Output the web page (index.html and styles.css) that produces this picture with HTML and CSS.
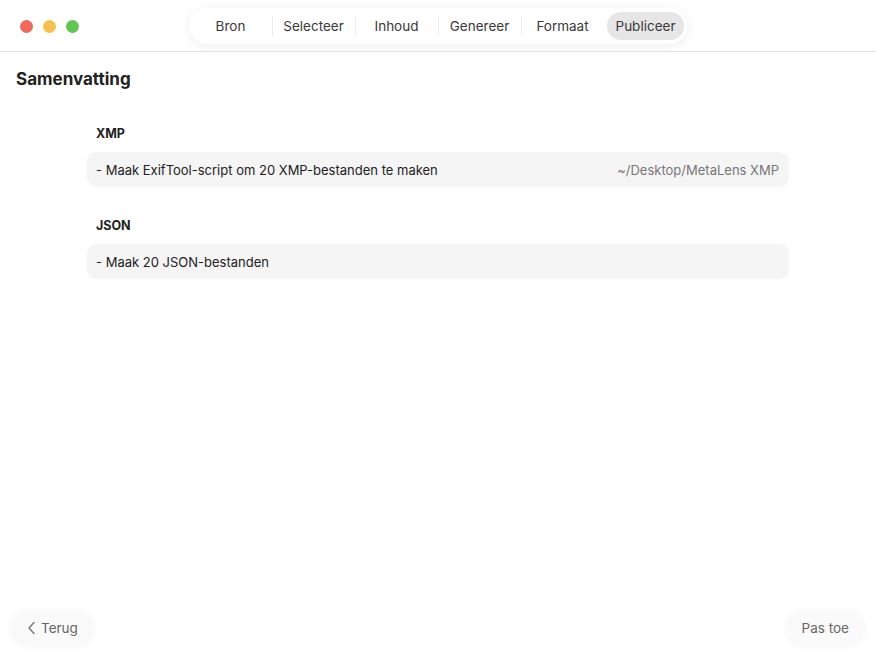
FILE: index.html
```html
<!DOCTYPE html>
<html lang="nl">
<head>
    <meta charset="UTF-8">
    <title>Publiceer</title>
    <link rel="stylesheet" href="styles.css">
</head>
<body>
    <header class="titlebar">
        <div class="traffic">
            <span class="light red"></span>
            <span class="light yellow"></span>
            <span class="light green"></span>
        </div>
        <nav class="steps">
            <span class="step">Bron</span>
            <span class="step">Selecteer</span>
            <span class="step">Inhoud</span>
            <span class="step">Genereer</span>
            <span class="step">Formaat</span>
            <span class="step active">Publiceer</span>
        </nav>
    </header>

    <main class="content">
        <h1 class="page_title">Samenvatting</h1>

        <section class="group">
            <h2 class="group_label">XMP</h2>
            <div class="row">
                <span>- Maak ExifTool-script om 20 XMP-bestanden te maken</span>
                <span class="row_path">~/Desktop/MetaLens XMP</span>
            </div>
        </section>

        <section class="group">
            <h2 class="group_label">JSON</h2>
            <div class="row">
                <span>- Maak 20 JSON-bestanden</span>
            </div>
        </section>
    </main>

    <footer class="actions">
        <button class="btn">
            <svg width="9" height="14" viewBox="0 0 9 14"><path d="M7 1.5 L2 7 L7 12.5" fill="none" stroke="#777" stroke-width="1.4" stroke-linecap="round" stroke-linejoin="round"/></svg>
            Terug
        </button>
        <button class="btn">Pas toe</button>
    </footer>
</body>
</html>
```

FILE: styles.css
```css
html, body {
    height: 100%;
}

body {
    margin: 0;
    font-family: 'Inter', 'Liberation Sans', sans-serif;
    color: #222;
    background: #fff;
    display: flex;
    flex-direction: column;
}

.titlebar {
    height: 52px;
    border-bottom: 1px solid #e3e3e3;
    display: flex;
    align-items: flex-start;
    box-sizing: border-box;
    flex-shrink: 0;
}

.traffic {
    display: flex;
    gap: 10px;
    padding: 20px 0 0 20px;
}

.light {
    width: 13px;
    height: 13px;
    border-radius: 50%;
}

.red { background: #ec6a5e; }
.yellow { background: #f4c04f; }
.green { background: #61c554; }

.steps {
    margin: 8px 0 0 110px;
    height: 36px;
    display: flex;
    background: #fff;
    border-radius: 18px;
    box-shadow: 0 2px 12px rgba(0, 0, 0, 0.07);
}

.step {
    width: 83px;
    display: flex;
    align-items: center;
    justify-content: center;
    font-size: 13.5px;
    color: #3a3a3a;
    position: relative;
}

.step + .step::before {
    content: "";
    position: absolute;
    left: 0;
    top: 8px;
    height: 20px;
    width: 1px;
    background: #ececec;
}

.step.active {
    background: #e6e6e6;
    border-radius: 14px;
    margin: 4px 3px;
    width: 77px;
}

.step.active::before {
    display: none;
}

.content {
    flex: 1;
    padding: 0 16px;
}

.page_title {
    margin: 16px 0 36px;
    font-size: 17px;
    font-weight: 700;
    line-height: 22px;
}

.group {
    margin: 0 71px 31px;
}

.group_label {
    margin: 0 0 10px 9px;
    font-size: 12.5px;
    font-weight: 700;
    line-height: 16px;
}

.row {
    height: 35px;
    background: #f5f5f5;
    border-radius: 9px;
    padding: 0 10px 0 9px;
    display: flex;
    align-items: center;
    justify-content: space-between;
    font-size: 13px;
    color: #222;
}

.row_path {
    color: #777;
}

.actions {
    display: flex;
    justify-content: space-between;
    padding: 0 12px 8px;
}

.btn {
    height: 32px;
    padding: 0 15px;
    border: none;
    border-radius: 16px;
    background: #fafafa;
    box-shadow: 0 1px 10px rgba(0, 0, 0, 0.05);
    font-family: inherit;
    font-size: 13.5px;
    color: #666;
    display: flex;
    align-items: center;
    gap: 5px;
}
```
